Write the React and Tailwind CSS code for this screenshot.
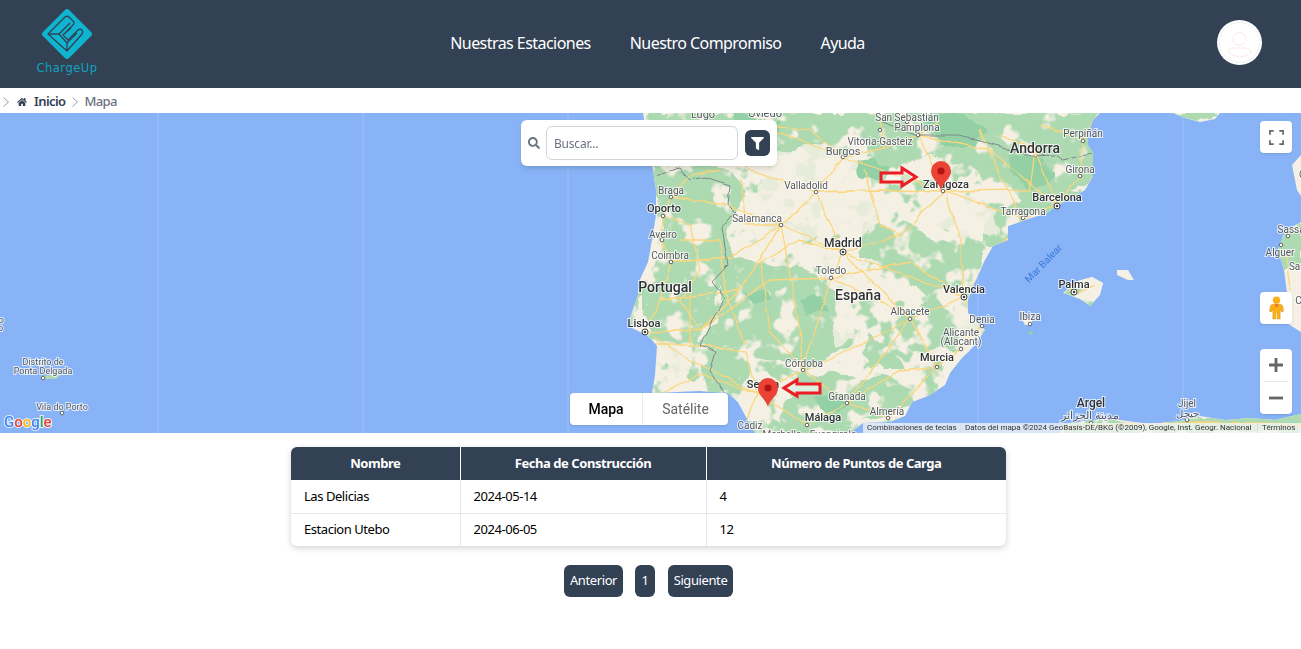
import React from 'react'
import { FaSearch, FaFilter, FaHome } from 'react-icons/fa'

const land = [
  'M643,113 L648,140 L653,170 L656,190 L656,215 L652,240 L648,262 L640,280 L638,295 L630,318 L632,328 L646,335 L652,340 L657,346 L655,375 L652,393 L700,391 L728,393 L738,402 L745,415 L755,433 L850,433 L863,423 L890,422 L905,416 L912,402 L930,395 L945,385 L950,373 L962,358 L975,345 L985,330 L968,313 L968,300 L973,286 L985,260 L993,246 L1008,240 L1008,226 L1025,220 L1047,213 L1058,205 L1085,190 L1093,176 L1093,153 L1088,145 L1088,133 L1093,120 L1100,113 Z',
  'M1173,113 L1220,113 L1215,119 L1200,122 L1185,118 Z',
  'M1060,433 L1062,425 L1090,420 L1120,420 L1150,424 L1180,421 L1200,416 L1225,420 L1250,418 L1275,420 L1301,414 L1301,433 Z',
  'M1301,222 L1285,231 L1278,250 L1284,270 L1288,300 L1285,322 L1301,332 Z',
  'M1301,155 L1292,165 L1297,190 L1301,196 Z',
  'M1063,293 L1078,281 L1092,277 L1103,283 L1100,295 L1090,306 L1080,299 Z',
  'M1117,270 L1128,270 L1134,280 L1128,280 L1117,275 Z',
  'M1022,319 L1032,316 L1032,325 L1025,325 Z',
]

const greens = [
  'M653,165 L700,160 L735,172 L745,190 L738,212 L728,228 L735,262 L722,284 L716,312 L705,330 L697,346 L660,346 L648,325 L642,290 L655,258 L660,220 Z',
  'M650,113 L860,113 L865,132 L840,145 L800,145 L770,160 L730,165 L690,160 L655,165 Z',
  'M860,113 L1100,113 L1095,180 L1060,198 L1025,205 L1005,190 L985,180 L965,165 L925,155 L895,170 L865,155 Z',
  'M722,255 L765,262 L800,268 L840,290 L835,320 L845,345 L815,365 L770,360 L735,350 L700,345 L722,310 Z',
  'M760,365 L800,372 L830,375 L880,378 L925,390 L905,408 L880,415 L850,425 L800,428 L775,415 L790,395 Z',
  'M865,225 L905,222 L935,240 L985,245 L978,275 L960,288 L925,295 L890,280 L862,255 Z',
  'M895,320 L930,300 L955,310 L975,328 L955,350 L925,352 L900,345 Z',
  'M700,345 L745,352 L750,375 L735,392 L705,390 L700,370 Z',
  'M1085,192 L1060,205 L1035,213 L1010,232 L1000,245 L985,245 L985,225 L1010,205 L1050,195 Z',
  'M868,335 L895,345 L905,372 L880,372 L860,355 Z',
  'M1170,113 L1218,113 L1212,119 L1195,121 Z',
  'M1064,293 L1078,281 L1090,278 L1082,290 L1072,296 Z',
  'M1062,433 L1062,425 L1090,420 L1150,424 L1200,416 L1301,414 L1301,433 Z',
  'M1301,222 L1285,231 L1278,250 L1284,270 L1301,270 Z',
]

const darkGreens = [
  'M854,160 L872,158 L888,166 L882,178 L860,180 Z',
  'M740,113 L780,125 L770,140 L735,135 Z',
  'M920,118 L965,116 L990,132 L975,148 L945,146 Z',
  'M1010,155 L1040,160 L1055,178 L1030,190 L1010,176 Z',
  'M745,290 L765,288 L770,300 L752,305 Z',
  'M800,300 L820,296 L828,312 L806,318 Z',
  'M815,400 L835,392 L845,405 L825,415 Z',
]

const creams = [
  'M770,150 L825,145 L860,165 L868,190 L880,220 L860,240 L830,232 L795,240 L765,232 L755,200 Z',
  'M810,245 L860,250 L870,285 L850,305 L855,340 L835,345 L835,290 Z',
  'M935,190 L975,195 L1000,210 L995,235 L960,240 L935,225 Z',
  'M960,315 L983,325 L975,345 L955,345 Z',
  'M735,395 L770,400 L755,425 L745,412 Z',
  'M655,340 L690,345 L690,375 L665,380 Z',
]

const roads = [
  '843,252 816,192 843,157 885,148 918,135 907,122',
  '843,252 781,225 725,205 671,197 663,216',
  '843,252 831,278 803,370 757,393 745,425',
  '843,252 910,319 937,367 888,418',
  '843,252 900,235 945,191 1023,218 1057,206 1080,176 1083,141',
  '843,252 964,297 982,326 960,349 937,367',
  '816,192 781,225 740,290 700,330 645,332',
  '663,216 662,240 671,262 660,300 645,332',
  '645,332 690,360 757,393 803,370 847,403 888,418',
  '807,425 847,403 910,319',
  '781,225 800,330 803,370',
  '945,191 918,135 940,120',
  '1023,218 964,297',
  '700,130 760,125 843,157 945,191',
  '671,262 730,258 781,225',
  '757,393 807,425',
  '660,393 700,375 757,393',
  '700,330 770,280 831,278 910,262 964,297',
  '945,191 960,240 964,297',
  '1057,206 1035,150 1000,135',
  '720,150 750,170 816,192',
  '1095,120 1083,141 1040,125',
  '1065,290 1080,292 1095,285',
  '1062,428 1100,425 1200,423 1301,425',
  '1285,250 1290,290',
  '663,216 690,225 700,270 680,300 700,330',
  '671,197 690,175 720,170',
  '680,240 720,240 725,290 745,345',
  '660,300 700,295 740,290',
  '655,345 700,345 745,352 757,393',
  '690,290 690,345',
  '843,157 810,130 770,125',
  '885,148 880,122',
  '918,135 990,150 1057,206',
  '980,130 1000,175 1023,218',
  '1035,150 1030,190 945,191',
  '816,192 880,190 945,191',
  '843,252 800,240 760,262',
  '760,262 770,330 803,370',
  '910,319 964,297',
  '831,278 880,300 910,319',
  '803,370 860,345 910,319',
  '847,403 900,370 937,367',
  '740,180 745,225 781,225',
  '864,170 880,225 900,235',
]

const borders = [
  '657,176 680,168 690,180 705,177 730,185 728,205 735,212 722,228 728,265 712,282 725,298 712,320 700,345 716,352 710,372 725,393',
  '880,122 915,135 958,135 980,140 1030,156 1055,155 1062,160 1092,154',
]

const dots = [
  [816,192],[843,157],[781,225],[663,216],[671,197],[662,240],[671,262],[831,278],[910,319],[803,370],[847,403],[888,418],[1023,218],[1080,176],[1083,141],[982,326],[961,349],[1030,324],[918,135],[880,130],[907,122],[937,367],[807,425],[943,191],[1091,423],[1187,420],[43,378],[62,413],[1288,236],[1281,245],
]

const bigDots = [[843,252],[645,332],[1057,206],[964,297],[1074,292]]

const labels = [
  ['Lugo', 703, 118, 11], ['Oviedo', 765, 117, 11], ['San Sebastián', 907, 121, 10], ['Pamplona', 917, 131, 10],
  ['Vitoria-Gasteiz', 880, 145, 10], ['Burgos', 843, 155, 11], ['Valladolid', 806, 189, 10], ['Braga', 671, 194, 10],
  ['Oporto', 664, 212, 11, 500], ['Aveiro', 663, 238, 10], ['Salamanca', 757, 222, 10], ['Coimbra', 670, 259, 10],
  ['Madrid', 843, 247, 12, 500], ['Toledo', 831, 274, 10], ['Portugal', 665, 292, 14, 500], ['España', 858, 300, 14, 500],
  ['Lisboa', 644, 327, 11, 500], ['Albacete', 910, 315, 10], ['Valencia', 964, 293, 11, 500], ['Alicante', 961, 336, 10],
  ['(Alacant)', 961, 345, 10], ['Murcia', 937, 361, 11, 500], ['Córdoba', 804, 367, 10], ['Sevilla', 763, 388, 11, 500],
  ['Granada', 847, 400, 10], ['Málaga', 823, 421, 11, 500], ['Almería', 887, 415, 10], ['Cádiz', 750, 429, 10],
  ['Marbella', 782, 438, 10], ['Fuengirola', 833, 438, 10], ['Zaragoza', 946, 188, 11, 500], ['Barcelona', 1057, 201, 11, 500],
  ['Tarragona', 1023, 215, 10], ['Girona', 1080, 173, 10], ['Perpiñán', 1083, 137, 10], ['Andorra', 1035, 153, 14, 500],
  ['Palma', 1074, 288, 11, 500], ['Ibiza', 1030, 320, 10], ['Denia', 982, 323, 10], ['Argel', 1091, 407, 12, 500],
  ['مدينة الجزائر', 1090, 419, 11], ['Jijel', 1187, 407, 10], ['جيجل', 1187, 417, 10], ['Sassari', 1294, 233, 10],
  ['Alguer', 1280, 256, 10], ['Sardegna', 1310, 270, 10], ['Distrito de', 43, 365, 9], ['Ponta Delgada', 43, 374, 9],
  ['Vila do Porto', 62, 410, 9], ['Pico', -5, 323, 9], ['do Pico', -12, 331, 9], ['Cagliari', 1312, 304, 10], ['Corse', 1312, 178, 10],
]

const MapCanvas = () => (
  <svg viewBox="0 113 1301 320" className="block h-full w-full font-['Roboto',sans-serif]">
    <defs>
      <filter id="wobble" x="0" y="0" width="100%" height="100%">
        <feTurbulence type="fractalNoise" baseFrequency="0.04" numOctaves="3" seed="7" />
        <feDisplacementMap in="SourceGraphic" scale="16" xChannelSelector="R" yChannelSelector="G" />
        <feGaussianBlur stdDeviation="0.7" />
      </filter>
      <filter id="wiggle" x="0" y="0" width="100%" height="100%">
        <feTurbulence type="fractalNoise" baseFrequency="0.06" numOctaves="2" seed="3" />
        <feDisplacementMap in="SourceGraphic" scale="5" xChannelSelector="R" yChannelSelector="G" />
      </filter>
      <filter id="mottleCream" x="0" y="0" width="100%" height="100%" colorInterpolationFilters="sRGB">
        <feTurbulence type="fractalNoise" baseFrequency="0.045" numOctaves="3" seed="4" />
        <feColorMatrix values="0 0 0 0 0.96 0 0 0 0 0.94 0 0 0 0 0.89 9 0 0 0 -5.1" />
        <feGaussianBlur stdDeviation="0.6" />
      </filter>
      <filter id="mottleGreen" x="0" y="0" width="100%" height="100%" colorInterpolationFilters="sRGB">
        <feTurbulence type="fractalNoise" baseFrequency="0.05" numOctaves="3" seed="11" />
        <feColorMatrix values="0 0 0 0 0.67 0 0 0 0 0.85 0 0 0 0 0.69 9 0 0 0 -4.9" />
        <feGaussianBlur stdDeviation="0.6" />
      </filter>
      <clipPath id="landClip">
        <path d={land.join(' ')} />
      </clipPath>
    </defs>
    <rect x="0" y="113" width="1301" height="320" fill="#88b4f7" />
    {[158, 363, 568, 978, 1183].map(x => (
      <line key={x} x1={x} y1="113" x2={x} y2="433" stroke="#9dc1f7" strokeWidth="1" />
    ))}
    <path d={land.join(' ')} fill="#f5f0e4" />
    <g clipPath="url(#landClip)">
      <g filter="url(#wobble)">
        {greens.map((d, i) => <path key={i} d={d} fill="#aedab2" />)}
      </g>
      <rect x="630" y="113" width="480" height="320" filter="url(#mottleGreen)" />
      <rect x="630" y="113" width="480" height="320" filter="url(#mottleCream)" />
      <g filter="url(#wobble)">
        {creams.map((d, i) => <path key={i} d={d} fill="#f5f0e4" opacity="0.8" />)}
        {darkGreens.map((d, i) => <path key={i} d={d} fill="#93d0a5" />)}
      </g>
      <g filter="url(#wiggle)">
        {roads.map((p, i) => <polyline key={i} points={p} fill="none" stroke="#fbd67c" strokeWidth="1.3" />)}
      </g>
    </g>
    <g filter="url(#wiggle)">
      {borders.map((p, i) => <polyline key={i} points={p} fill="none" stroke="#7c8a8a" strokeWidth="1" />)}
    </g>
    <path d="M40,376 L62,374 L56,379 L44,379 Z" fill="#aedab2" />
    <path d="M1027,332 L1033,331 L1032,335 Z" fill="#93d0a5" />
    {dots.map(([x, y], i) => <circle key={i} cx={x} cy={y} r="1.8" fill="#fff" stroke="#5f6368" strokeWidth="1" />)}
    {bigDots.map(([x, y], i) => (
      <g key={i}>
        <circle cx={x} cy={y} r="3" fill="#fff" stroke="#3c4043" strokeWidth="1" />
        <circle cx={x} cy={y} r="1.3" fill="#3c4043" />
      </g>
    ))}
    {labels.map(([text, x, y, size, weight]) => (
      <text
        key={text}
        x={x}
        y={y}
        textAnchor="middle"
        fontSize={size}
        fontWeight={weight || 400}
        fill={weight ? '#2f3134' : '#55585d'}
        stroke="#ffffff"
        strokeWidth="2"
        strokeOpacity="0.75"
        className="[paint-order:stroke]"
      >
        {text}
      </text>
    ))}
    <text x="1043" y="267" textAnchor="middle" fontSize="10" fill="#3b78d8" transform="rotate(-46 1043 263)">Mar Balear</text>
    <text x="4" y="427" fontSize="15" fontWeight="500" stroke="#ffffff" strokeWidth="2" strokeOpacity="0.8" className="[paint-order:stroke]">
      <tspan fill="#4285f4">G</tspan>
      <tspan fill="#ea4335">o</tspan>
      <tspan fill="#fbbc05">o</tspan>
      <tspan fill="#4285f4">g</tspan>
      <tspan fill="#34a853">l</tspan>
      <tspan fill="#ea4335">e</tspan>
    </text>
    {/* flechas rojas */}
    <path d="M881,173 L902,173 L902,168 L916,177 L902,186 L902,182 L881,182 Z" fill="#ffffff" fillOpacity="0.35" stroke="#ed1c24" strokeWidth="3" />
    <path d="M820,384 L797,384 L797,380 L784,388 L797,396 L797,393 L820,393 Z" fill="#ffffff" fillOpacity="0.6" stroke="#ed1c24" strokeWidth="3" />
    {/* marcadores */}
    <path d="M941,190 C939,182 931,179 931,171 A10,10 0 0 1 951,171 C951,179 943,182 941,190 Z" fill="#ea4335" />
    <circle cx="941" cy="171" r="3.6" fill="#b31412" />
    <path d="M768,407 C766,399 758,396 758,388 A10,10 0 0 1 778,388 C778,396 770,399 768,407 Z" fill="#ea4335" />
    <circle cx="768" cy="388" r="3.6" fill="#b31412" />
  </svg>
)

const Logo = () => (
  <div className="mb-[6px] flex w-[62px] flex-col items-center">
    <svg viewBox="0 0 54 54" className="h-[54px] w-[54px]">
      <rect x="8.5" y="8.5" width="37" height="37" rx="3" fill="#0fb5d0" transform="rotate(45 27 27)" />
      <path
        d="M8 27 L25 10 Q27 8.5 29 10 L33 14 Q35 16 33 18 L23 28 L28 33 L33 28 L38 23 Q40 21.5 42 23 Q43.5 25 42 27 L27 44 Z M8 27 L19 27 L27 36 L27 44 M19 27 L30 16 M23 28 L31 21 M27 36 L37 26"
        fill="none"
        stroke="#334155"
        strokeWidth="1.3"
        strokeLinejoin="round"
      />
    </svg>
    <span className="whitespace-nowrap font-['DejaVu_Sans',sans-serif] text-[11.5px] leading-[14px] tracking-[0.5px] text-[#0fa5bd]">ChargeUp</span>
  </div>
)

const Avatar = () => (
  <div className="mb-[4px] flex h-[45px] w-[45px] items-center justify-center rounded-full bg-white">
    <svg viewBox="0 0 45 45" className="h-[45px] w-[45px]" fill="none">
      <circle cx="22.5" cy="22.5" r="20" stroke="#f1f1f1" strokeWidth="1" />
      <circle cx="22.5" cy="19" r="6.5" stroke="#fbe9e9" strokeWidth="1" />
      <path d="M11 32 Q12 28 16 28 L29 28 Q33 28 34 32 Q29 37 22.5 37 Q16 37 11 32 Z" stroke="#fbe9e9" strokeWidth="1" />
    </svg>
  </div>
)

const Chevron = () => (
  <svg viewBox="0 0 8 12" className="h-3 w-2 text-gray-400" fill="none" stroke="currentColor" strokeWidth="1">
    <path d="M1.5 1.5 L6.5 6 L1.5 10.5" />
  </svg>
)

const rows = [
  { nombre: 'Las Delicias', fecha: '2024-05-14', puntos: 4 },
  { nombre: 'Estacion Utebo', fecha: '2024-06-05', puntos: 12 },
]

const App = () => {
  return (
    <div className="min-h-[649px] bg-white font-['Noto_Sans',sans-serif] text-black">
      {/* Navbar */}
      <header className="flex h-[88px] items-center justify-between bg-[#334155] pl-[36px] pr-[39px]">
        <Logo />
        <nav className="mb-[2px] flex gap-[39px] text-[16px] tracking-[-0.55px] text-white">
          <a>Nuestras Estaciones</a>
          <a>Nuestro Compromiso</a>
          <a>Ayuda</a>
        </nav>
        <Avatar />
      </header>

      {/* Breadcrumb */}
      <div className="flex h-[25px] items-center pl-[2px] pt-[2px] text-[13px] tracking-[-0.6px]">
        <Chevron />
        <FaHome className="ml-[7px] text-[10px] text-[#334155]" />
        <span className="ml-[7px] font-semibold text-[#334155]">Inicio</span>
        <span className="ml-[6px]"><Chevron /></span>
        <span className="ml-[5px] font-medium text-[#6b7280]">Mapa</span>
      </div>

      {/* Mapa */}
      <div className="relative h-[320px] overflow-hidden">
        <MapCanvas />

        <div className="absolute left-[521px] top-[7px] flex h-[46px] w-[256px] items-center rounded-md bg-white shadow-md">
          <FaSearch className="ml-[7px] text-[12px] text-[#6b7280]" />
          <input
            placeholder="Buscar..."
            className="ml-[6px] h-[34px] w-[192px] rounded-md border border-[#d1d5db] px-[7px] text-[12px] tracking-[-0.2px] outline-none placeholder:text-[#6b7280]"
          />
          <button className="ml-[7px] flex h-[26px] w-[25px] items-center justify-center rounded-md bg-[#334155]">
            <FaFilter className="text-[13px] text-white" />
          </button>
        </div>

        <div className="absolute left-[570px] top-[280px] flex h-[32px] w-[158px] rounded-sm bg-white font-['Roboto',sans-serif] text-[14px] shadow-sm">
          <div className="flex w-[73px] items-center justify-center border-r border-[#ebebeb] font-medium text-black">Mapa</div>
          <div className="flex flex-1 items-center justify-center text-[#666666]">Satélite</div>
        </div>

        <button className="absolute right-[9px] top-[8px] flex h-[32px] w-[32px] items-center justify-center rounded-sm bg-white shadow-sm">
          <svg viewBox="0 0 16 16" className="h-[15px] w-[15px]" fill="none" stroke="#666666" strokeWidth="1.8">
            <path d="M1 5 V1 H5 M11 1 H15 V5 M15 11 V15 H11 M5 15 H1 V11" />
          </svg>
        </button>

        <button className="absolute right-[9px] top-[179px] flex h-[32px] w-[32px] items-center justify-center rounded-sm bg-white shadow-sm">
          <svg viewBox="0 0 16 26" className="h-[24px] w-[15px]">
            <circle cx="8" cy="4.5" r="4" fill="#fbb116" />
            <path d="M4 9 H12 Q14.5 9 15 12 L15.5 17 H13 L12 13 V25 H8.7 V18 H7.3 V25 H4 V13 L3 17 H0.5 L1 12 Q1.5 9 4 9 Z" fill="#fbb116" stroke="#c98a10" strokeWidth="0.4" />
            <path d="M5.5 9 L8 13 L10.5 9 Z" fill="#e8762c" />
          </svg>
        </button>

        <div className="absolute right-[9px] top-[236px] flex h-[65px] w-[32px] flex-col items-center rounded-sm bg-white shadow-sm">
          <div className="flex h-[32px] items-center justify-center">
            <svg viewBox="0 0 14 14" className="h-[14px] w-[14px]" fill="#666666"><path d="M5.6 0 H8.4 V5.6 H14 V8.4 H8.4 V14 H5.6 V8.4 H0 V5.6 H5.6 Z" /></svg>
          </div>
          <div className="h-px w-[24px] bg-[#e6e6e6]" />
          <div className="flex h-[32px] items-center justify-center">
            <svg viewBox="0 0 14 14" className="h-[14px] w-[14px]" fill="#666666"><path d="M0 5.6 H14 V8.4 H0 Z" /></svg>
          </div>
        </div>

        <div className="absolute bottom-0 right-0 flex h-[10px] w-[438px] items-center bg-[#f5f5f5]/75 font-['Roboto',sans-serif] text-[8px] leading-[10px] text-[#333333]">
          <span className="w-[98px] whitespace-nowrap border-r border-[#dddddd] pl-[4px]">Combinaciones de teclas</span>
          <span className="w-[297px] whitespace-nowrap border-r border-[#dddddd] pl-[4px]">Datos del mapa ©2024 GeoBasis-DE/BKG (©2009), Google, Inst. Geogr. Nacional</span>
          <span className="whitespace-nowrap pl-[4px]">Términos</span>
        </div>
      </div>

      {/* Tabla */}
      <div className="flex justify-center pr-[4px]">
        <div className="mt-[14px] w-[715px] overflow-hidden rounded-md shadow-[0_2px_6px_rgba(0,0,0,0.18)]">
          <table className="w-full table-fixed border-collapse text-[13px] tracking-[-0.45px]">
            <thead>
              <tr className="h-[33px] bg-[#334155] text-white">
                <th className="w-[169px] border-r border-white font-bold">Nombre</th>
                <th className="w-[246px] border-r border-white font-bold">Fecha de Construcción</th>
                <th className="font-bold">Número de Puntos de Carga</th>
              </tr>
            </thead>
            <tbody>
              {rows.map(row => (
                <tr key={row.nombre} className="h-[33px] border-b border-[#e5e7eb] last:border-b-0">
                  <td className="border-r border-[#e5e7eb] pl-[13px]">{row.nombre}</td>
                  <td className="border-r border-[#e5e7eb] pl-[13px]">{row.fecha}</td>
                  <td className="pl-[13px]">{row.puntos}</td>
                </tr>
              ))}
            </tbody>
          </table>
        </div>
      </div>

      {/* Paginacion */}
      <div className="mt-[19px] flex justify-center pr-[4px] text-[13px] tracking-[-0.4px] text-white">
        <button className="h-[32px] w-[59px] rounded-md bg-[#334155]">Anterior</button>
        <button className="ml-[12px] h-[32px] w-[20px] rounded-md bg-[#334155]">1</button>
        <button className="ml-[13px] h-[32px] w-[65px] rounded-md bg-[#334155]">Siguiente</button>
      </div>
    </div>
  )
}

export default App
